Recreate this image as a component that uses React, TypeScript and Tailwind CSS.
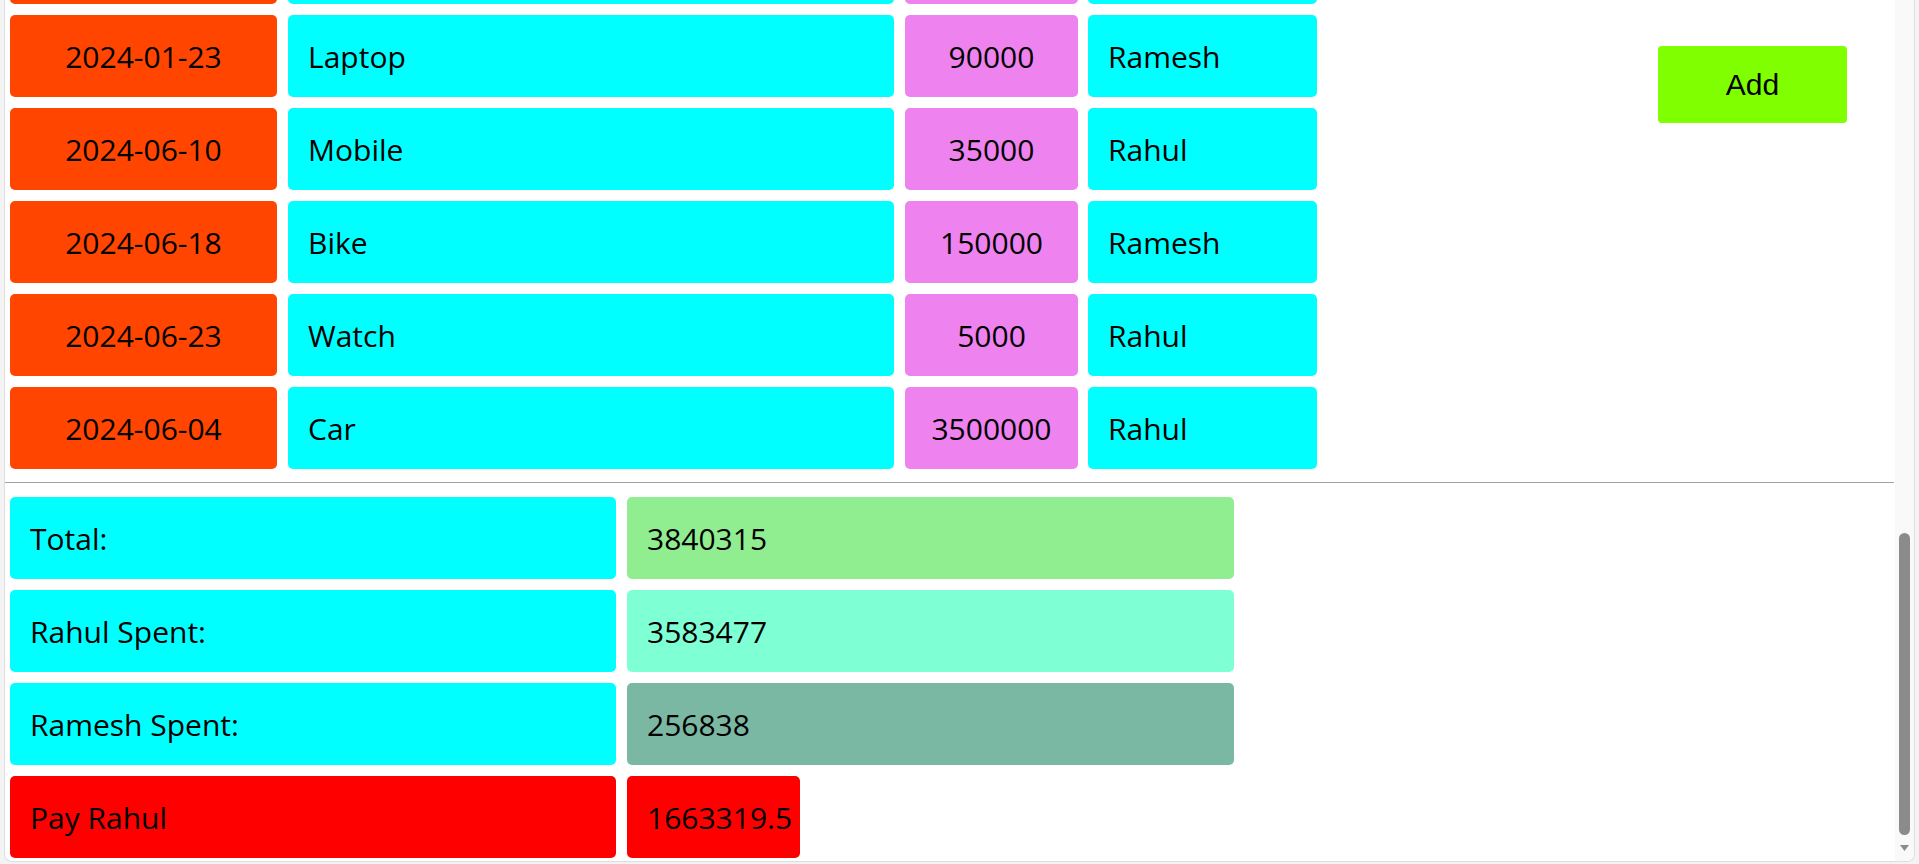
import React from 'react';

type Expense = { date: string; item: string; amount: number | string; person: string };

// first row is scrolled out of view above the top edge
const expenses: Expense[] = [
  { date: '', item: '', amount: '', person: '' },
  { date: '2024-01-23', item: 'Laptop', amount: 90000, person: 'Ramesh' },
  { date: '2024-06-10', item: 'Mobile', amount: 35000, person: 'Rahul' },
  { date: '2024-06-18', item: 'Bike', amount: 150000, person: 'Ramesh' },
  { date: '2024-06-23', item: 'Watch', amount: 5000, person: 'Rahul' },
  { date: '2024-06-04', item: 'Car', amount: 3500000, person: 'Rahul' },
];

const cell = 'h-[82px] rounded-[5px] flex items-center';

export default function App() {
  return (
    <div className="h-[864px] w-full overflow-hidden bg-[#f3f3f3] px-[4px] pb-[2px] font-['Open_Sans',sans-serif] text-[30px] text-black">
      <div className="relative h-full overflow-hidden rounded-b-[8px] border-x border-b border-[#dedede] bg-white">
        {/* page content, scrolled */}
        <div className="pr-[20px]">
          <div className="-mt-[78px] flex pl-[5px]">
            {/* expense rows */}
            <div className="flex flex-col gap-[11px]">
              {expenses.map((e, i) => (
                <div key={i} className="flex">
                  <div className={`${cell} w-[267px] justify-center bg-[#ff4500]`}>{e.date}</div>
                  <div className={`${cell} ml-[11px] w-[606px] bg-[#00ffff] pl-[20px]`}>{e.item}</div>
                  <div className={`${cell} ml-[11px] w-[173px] justify-center bg-[#ee82ee]`}>{e.amount}</div>
                  <div className={`${cell} ml-[10px] w-[229px] bg-[#00ffff] pl-[20px]`}>{e.person}</div>
                </div>
              ))}
            </div>

            <div className="ml-[341px] pt-[124px]">
              <button className="flex h-[77px] w-[189px] items-center justify-center rounded-[4px] bg-[#7fff00] font-['Liberation_Sans',Arial,sans-serif] text-[30px] text-black">
                Add
              </button>
            </div>
          </div>

          <hr className="mt-[13px] border-t border-[#a3a3a3]" />

          {/* summary */}
          <div className="mt-[14px] flex flex-col gap-[11px] pl-[5px]">
            <div className="flex gap-[11px]">
              <div className={`${cell} w-[606px] bg-[#00ffff] pl-[20px]`}>Total:</div>
              <div className={`${cell} w-[607px] bg-[#90ee90] pl-[20px]`}>3840315</div>
            </div>
            <div className="flex gap-[11px]">
              <div className={`${cell} w-[606px] bg-[#00ffff] pl-[20px]`}>Rahul Spent:</div>
              <div className={`${cell} w-[607px] bg-[#7fffd4] pl-[20px]`}>3583477</div>
            </div>
            <div className="flex gap-[11px]">
              <div className={`${cell} w-[606px] bg-[#00ffff] pl-[20px]`}>Ramesh Spent:</div>
              <div className={`${cell} w-[607px] bg-[#7bb8a3] pl-[20px]`}>256838</div>
            </div>
            <div className="flex gap-[11px]">
              <div className={`${cell} w-[606px] bg-[#ff0000] pl-[20px]`}>Pay Rahul</div>
              <div className={`${cell} w-[173px] bg-[#ff0000] pl-[20px] whitespace-nowrap`}>1663319.5</div>
            </div>
          </div>
        </div>

        {/* scrollbar */}
        <div className="absolute right-0 top-0 h-full w-[19px] bg-[#f9f9f9]">
          <div className="absolute left-[4px] top-[533px] h-[302px] w-[11px] rounded-full bg-[#8b8b8b]" />
          <svg className="absolute left-[5px] top-[845px]" width="9" height="6" viewBox="0 0 9 6">
            <path d="M0 0 H9 L4.5 6 Z" fill="#8b8b8b" />
          </svg>
        </div>
      </div>
    </div>
  );
}
